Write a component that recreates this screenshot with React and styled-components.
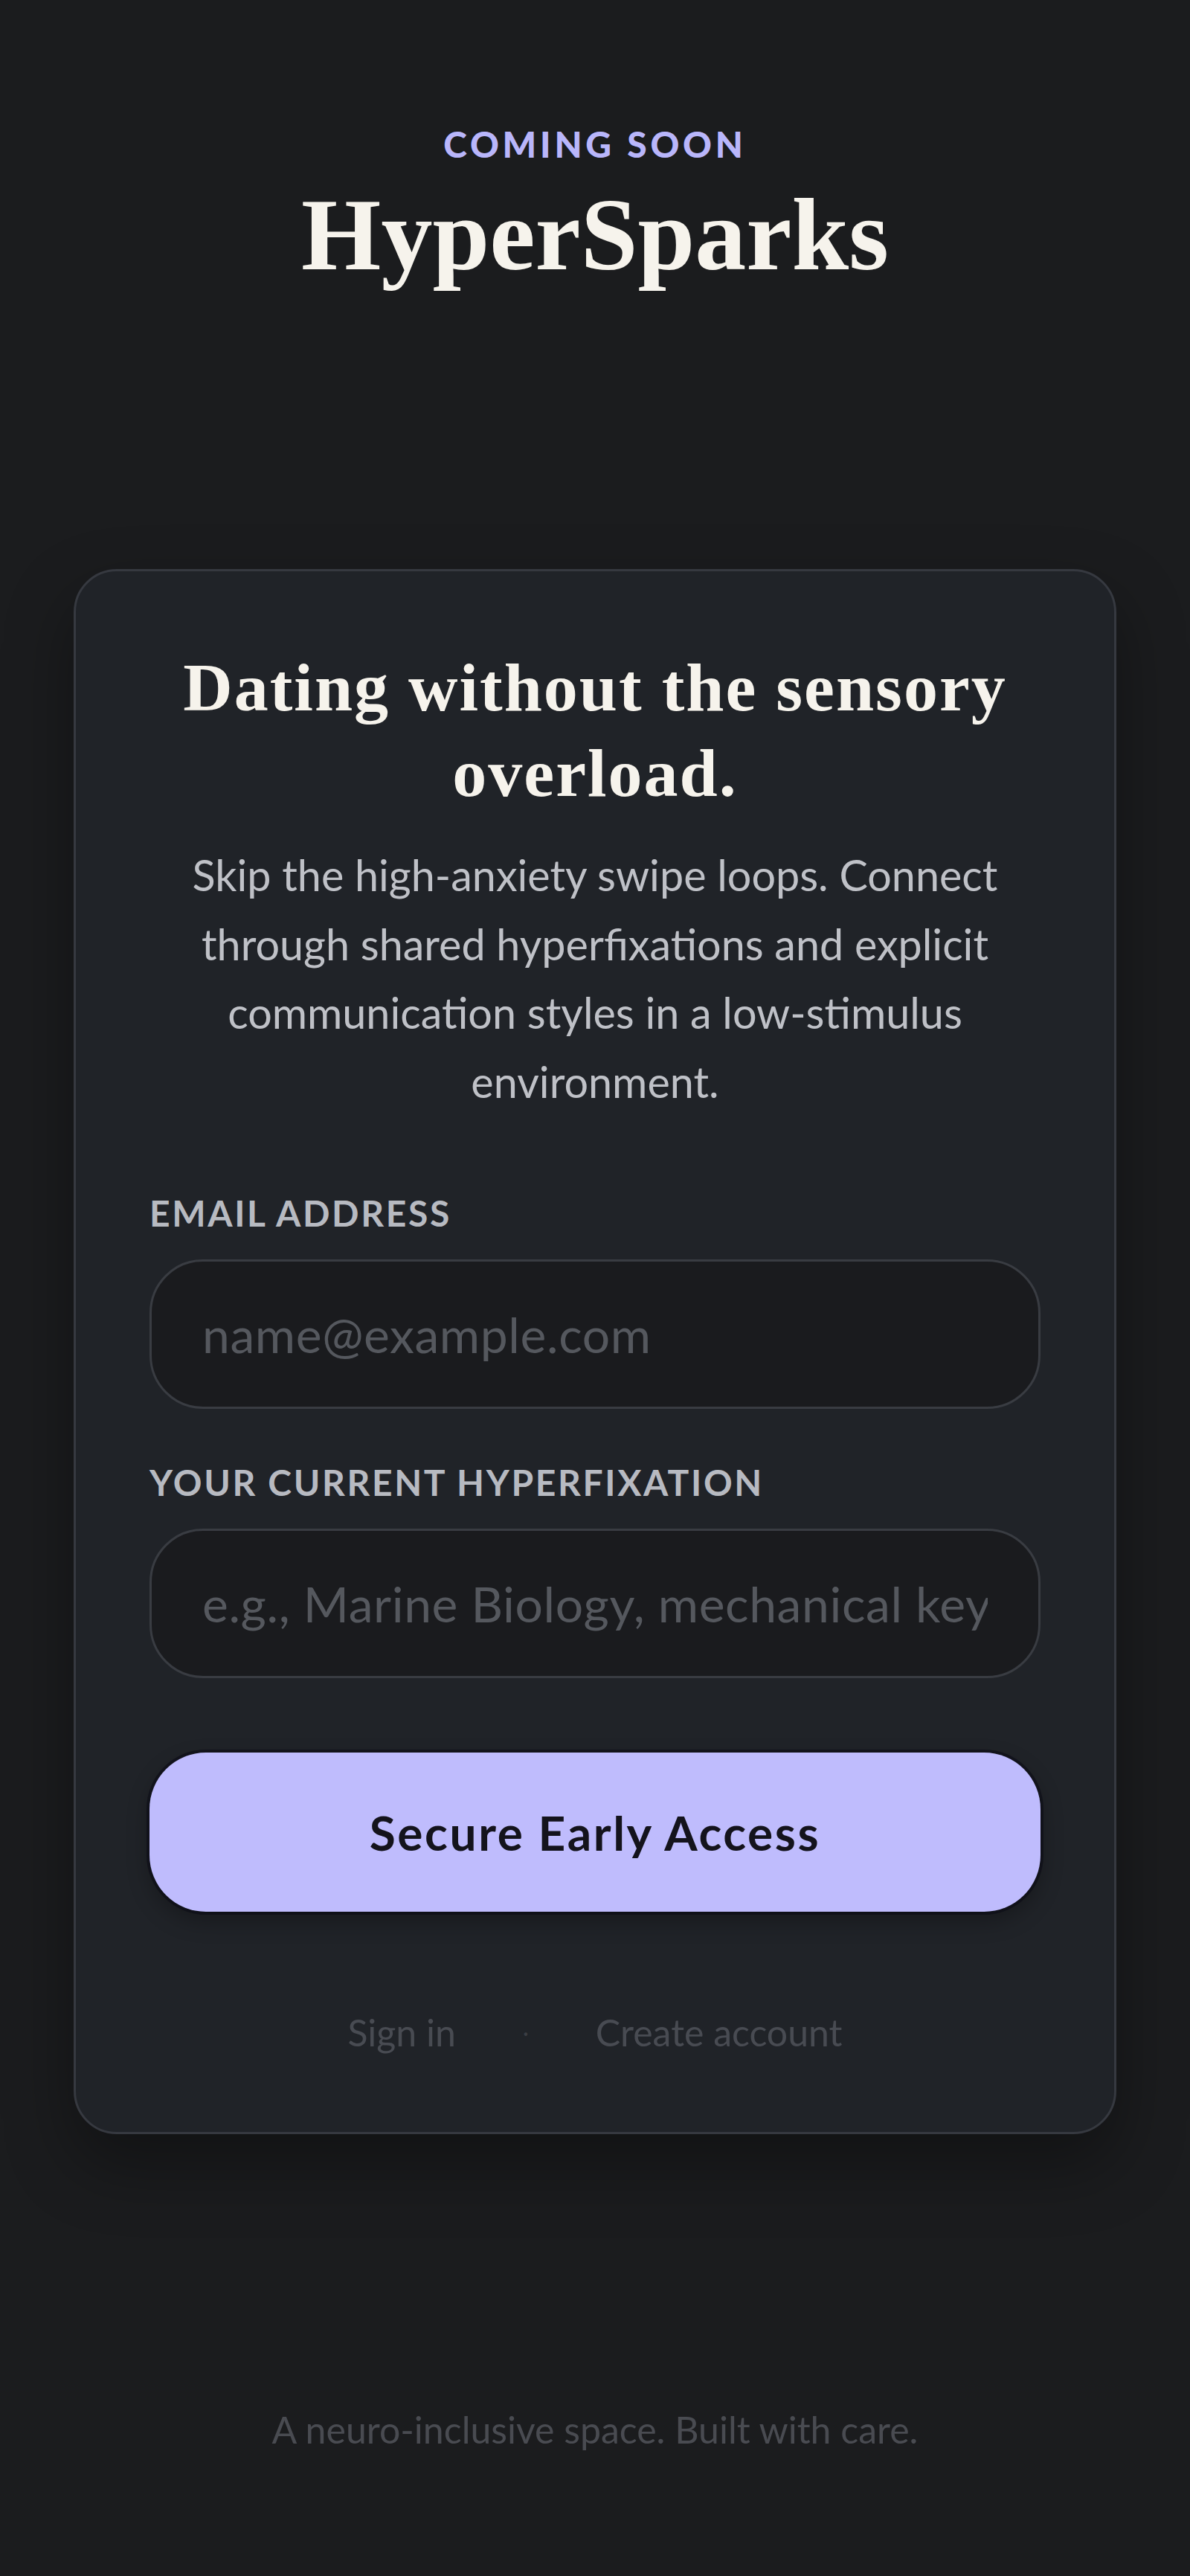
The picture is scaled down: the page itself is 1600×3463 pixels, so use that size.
import React from "react";
import styled, { createGlobalStyle } from "styled-components";

const GlobalStyle = createGlobalStyle`
  * { box-sizing: border-box; }
  html, body {
    margin: 0;
    padding: 0;
    background: #1b1c1e;
  }
  body {
    font-family: "Lato", "Noto Sans", sans-serif;
    -webkit-font-smoothing: antialiased;
  }
`;

const Page = styled.div`
  min-height: 3463px;
  display: flex;
  flex-direction: column;
  align-items: center;
  padding-top: 164px;
`;

const Header = styled.header`
  display: flex;
  flex-direction: column;
  align-items: center;
`;

const Eyebrow = styled.span`
  font-size: 48px;
  line-height: 60px;
  font-weight: 900;
  letter-spacing: 0.1em;
  color: #b9b6fb;
`;

const Brand = styled.h1`
  margin: 17px 0 0;
  font-family: "Liberation Serif", "DejaVu Serif", serif;
  font-size: 138px;
  line-height: 150px;
  font-weight: 700;
  letter-spacing: 0;
  color: #f6f3ec;
`;

const Card = styled.main`
  width: 1402px;
  margin-top: 374px;
  padding: 99px 99px 104px;
  background: #202328;
  border: 3px solid #363940;
  border-radius: 58px;
  box-shadow: 0 40px 90px rgba(0, 0, 0, 0.35);
  display: flex;
  flex-direction: column;
`;

const Heading = styled.h2`
  margin: 0;
  text-align: center;
  font-family: "Liberation Serif", "DejaVu Serif", serif;
  font-size: 92px;
  line-height: 115px;
  font-weight: 700;
  letter-spacing: 2px;
  color: #f6f3ec;
`;

const Lead = styled.p`
  margin: 33px 0 0;
  text-align: center;
  font-size: 57.5px;
  line-height: 92.5px;
  color: #bfc1c7;
`;

const Form = styled.form`
  margin-top: 101px;
  display: flex;
  flex-direction: column;
`;

const Field = styled.div`
  display: flex;
  flex-direction: column;
  gap: 32px;
  margin-top: ${(p) => (p.$first ? "0" : "69px")};
`;

const Label = styled.label`
  font-size: 48px;
  line-height: 60px;
  font-weight: 700;
  letter-spacing: 0.055em;
  text-transform: uppercase;
  color: #b7bac1;
`;

const Input = styled.input`
  height: 201px;
  width: 100%;
  padding: 0 68px;
  background: #1a1b1e;
  border: 3px solid #393c42;
  border-radius: 72px;
  font-family: inherit;
  font-size: 66px;
  letter-spacing: 0.6px;
  color: #e6e6ea;
  outline: none;
  &::placeholder {
    color: #55585e;
  }
`;

const Submit = styled.button`
  margin-top: 100px;
  height: 214px;
  width: 100%;
  border: none;
  border-radius: 76px;
  background: #bfbcfd;
  color: #14131c;
  font-family: inherit;
  font-size: 64px;
  font-weight: 700;
  letter-spacing: 0.04em;
  box-shadow: 0 0 0 4px rgba(10, 10, 20, 0.55), 0 12px 30px rgba(0, 0, 0, 0.3);
  cursor: pointer;
`;

const Links = styled.nav`
  margin-top: 132px;
  display: flex;
  justify-content: center;
  align-items: center;
  gap: 90px;
  font-size: 50px;
  line-height: 60px;
  color: #484b52;
`;

const LinkItem = styled.a`
  color: inherit;
  text-decoration: none;
`;

const Dot = styled.span`
  font-size: 30px;
  color: #3b3e44;
`;

const Footer = styled.footer`
  margin-top: 367px;
  font-size: 50px;
  line-height: 60px;
  color: #494b51;
`;

export default function App() {
  return (
    <>
      <GlobalStyle />
      <Page>
        <Header>
          <Eyebrow>COMING SOON</Eyebrow>
          <Brand>HyperSparks</Brand>
        </Header>

        <Card>
          <Heading>
            Dating without the sensory
            <br />
            overload.
          </Heading>
          <Lead>
            Skip the high-anxiety swipe loops. Connect through shared
            hyperfixations and explicit communication styles in a low-stimulus
            environment.
          </Lead>

          <Form onSubmit={(e) => e.preventDefault()}>
            <Field $first>
              <Label htmlFor="email">Email address</Label>
              <Input id="email" type="email" placeholder="name@example.com" />
            </Field>
            <Field>
              <Label htmlFor="fixation">Your current hyperfixation</Label>
              <Input
                id="fixation"
                type="text"
                placeholder="e.g., Marine Biology, mechanical keyboards, tea"
              />
            </Field>
            <Submit type="submit">Secure Early Access</Submit>
          </Form>

          <Links>
            <LinkItem href="#">Sign in</LinkItem>
            <Dot>·</Dot>
            <LinkItem href="#">Create account</LinkItem>
          </Links>
        </Card>

        <Footer>A neuro-inclusive space. Built with care.</Footer>
      </Page>
    </>
  );
}
